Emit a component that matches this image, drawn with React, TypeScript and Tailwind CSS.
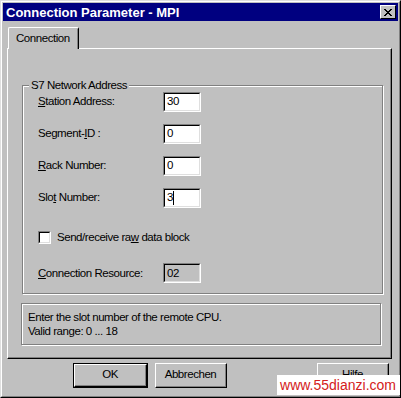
const font = { fontFamily: '"Liberation Sans", Arial, sans-serif' };

function Sunken({ value, disabled, cursor }: { value: string; disabled?: boolean; cursor?: boolean }) {
  return (
    <div
      className={`w-[38px] h-[20px] border-t border-l border-t-[#808080] border-l-[#808080] border-b border-r border-b-white border-r-white ${
        disabled ? "bg-[#c0c0c0]" : "bg-white"
      }`}
    >
      <div className="h-full border-t border-l border-t-black border-l-black border-b border-r border-b-[#dfdfdf] border-r-[#dfdfdf] pl-[2px] flex items-center">
        <span>{value}</span>
        {cursor && <span className="w-px h-[14px] bg-black" />}
      </div>
    </div>
  );
}

function Row({ label, value, cursor, disabled }: { label: React.ReactNode; value: string; cursor?: boolean; disabled?: boolean }) {
  return (
    <div className="flex items-center h-[20px]">
      <div className="w-[125px]">{label}</div>
      <Sunken value={value} cursor={cursor} disabled={disabled} />
    </div>
  );
}

function Button({ children, isDefault }: { children: React.ReactNode; isDefault?: boolean }) {
  const inner = (
    <div className="h-full border-t border-l border-t-white border-l-white border-b border-r border-b-black border-r-black">
      <div className="h-full border-b border-r border-b-[#808080] border-r-[#808080] flex items-center justify-center">
        {children}
      </div>
    </div>
  );
  return isDefault ? (
    <div className="w-[75px] h-[25px] border border-black">{inner}</div>
  ) : (
    <div className="w-[72px] h-[25px]">{inner}</div>
  );
}

export default function App() {
  return (
    <div className="w-[401px] h-[398px] bg-[#c0c0c0] text-black text-[11.5px] tracking-[-0.45px]" style={font}>
      <div className="w-full h-full border-t border-l border-t-[#dfdfdf] border-l-[#dfdfdf] border-b border-r border-b-black border-r-black">
        <div className="w-full h-full border-t border-l border-t-white border-l-white border-b border-r border-b-[#808080] border-r-[#808080] p-px flex flex-col">
          {/* title bar */}
          <div className="h-[18px] bg-[#000080] flex items-center justify-between pl-[3px] pr-[2px]">
            <span className="text-white font-bold text-[13px] tracking-normal leading-none">Connection Parameter - MPI</span>
            <div className="w-[16px] h-[14px] bg-[#c0c0c0] border-t border-l border-t-white border-l-white border-b border-r border-b-black border-r-black flex items-center justify-center">
              <svg width="8" height="7" viewBox="0 0 8 7">
                <path d="M0 0h2v1h1v1h2V1h1V0h2v1H7v1H6v1H5v1h1v1h1v1h1v1H6V6H5V5H3v1H2v1H0V6h1V5h1V4h1V3H2V2H1V1H0z" fill="#000" />
              </svg>
            </div>
          </div>

          {/* tab */}
          <div className="mt-[6px] ml-[5px] flex">
            <div className="h-[22px] w-[71px] border-t border-l border-t-white border-l-white border-r border-r-black rounded-t-[2px] flex items-center pl-[7px] bg-[#c0c0c0] relative z-10 -mb-px">
              <div className="absolute right-0 top-[1px] bottom-0 w-px bg-[#808080]" />
              Connection
            </div>
          </div>

          {/* panel */}
          <div className="ml-[4px] w-[385px] h-[311px] border-t border-l border-t-white border-l-white border-b border-r border-b-black border-r-black">
            <div className="h-full border-b border-r border-b-[#808080] border-r-[#808080] pt-[36px] pl-[14px] pr-[7px]">
              {/* group box */}
              <div className="relative h-[209px] border border-[#808080] shadow-[inset_1px_1px_0_#fff,1px_1px_0_#fff] pt-[6px] pl-[15px]">
                <span className="absolute left-[6px] -top-[8px] bg-[#c0c0c0] px-[2px] leading-[14px]">
                  S7 Network Address
                </span>
                <div className="flex flex-col gap-[12px]">
                  <Row label={<><u>S</u>tation Address:</>} value="30" />
                  <Row label={<>Segment-<u>I</u>D :</>} value="0" />
                  <Row label={<><u>R</u>ack Number:</>} value="0" />
                  <Row label={<>Slo<u>t</u> Number:</>} value="3" cursor />
                </div>
                <div className="mt-[21px] flex items-center gap-[6px]">
                  <div className="w-[13px] h-[13px] bg-white border-t border-l border-t-[#808080] border-l-[#808080] border-b border-r border-b-white border-r-white">
                    <div className="h-full border-t border-l border-t-black border-l-black border-b border-r border-b-[#dfdfdf] border-r-[#dfdfdf]" />
                  </div>
                  <span>
                    Send/receive ra<u>w</u> data block
                  </span>
                </div>
                <div className="mt-[17px]">
                  <Row label={<><u>C</u>onnection Resource:</>} value="02" disabled />
                </div>
              </div>

              {/* info box */}
              <div className="mt-[9px] h-[42px] w-[360px] -ml-px border border-[#808080] shadow-[inset_1px_1px_0_#fff,1px_1px_0_#fff] pl-[6px] pt-[6px] leading-[14px]">
                <div>Enter the slot number of the remote CPU.</div>
                <div>Valid range: 0 ... 18</div>
              </div>
            </div>
          </div>

          {/* buttons */}
          <div className="relative mt-[4px] flex pl-[70px]">
            <Button isDefault>OK</Button>
            <div className="ml-[7px]">
              <Button>Abbrechen</Button>
            </div>
            <div className="ml-auto mr-[6px]">
              <div className="w-[75px] h-[25px]">
                <Button>Hilfe</Button>
              </div>
            </div>
            <div className="absolute -right-[2px] top-[12px] bg-white h-[20px] w-[123px] flex items-center justify-end pr-[4px] text-[#d42020] text-[14px] tracking-normal">
              www.55dianzi.com
            </div>
          </div>
        </div>
      </div>
    </div>
  );
}
